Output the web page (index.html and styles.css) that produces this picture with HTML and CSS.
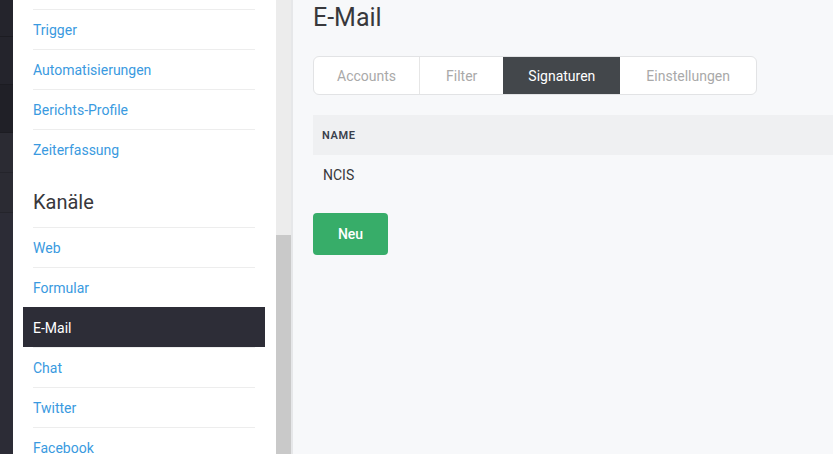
FILE: index.html
```html
<!DOCTYPE html>
<html lang="de">
<head>
  <meta charset="UTF-8">
  <title>E-Mail – Kanäle</title>
  <link rel="stylesheet" href="styles.css">
</head>
<body>

<div class="rail">
  <div class="rail-block"></div>
  <div class="rail-block"></div>
  <div class="rail-block rail-dark"></div>
  <div class="rail-block rail-light"></div>
  <div class="rail-block rail-light"></div>
  <div class="rail-rest"></div>
</div>

<aside class="sidebar">
  <ul class="nav">
    <li><a href="#">Trigger</a></li>
    <li><a href="#">Automatisierungen</a></li>
    <li><a href="#">Berichts-Profile</a></li>
    <li><a href="#">Zeiterfassung</a></li>
  </ul>
  <h3 class="nav-header">Kanäle</h3>
  <ul class="nav">
    <li><a href="#">Web</a></li>
    <li><a href="#">Formular</a></li>
    <li class="active"><a href="#">E-Mail</a></li>
    <li><a href="#">Chat</a></li>
    <li><a href="#">Twitter</a></li>
    <li><a href="#">Facebook</a></li>
  </ul>
</aside>

<div class="scrollbar">
  <div class="scroll-thumb"></div>
</div>

<main class="content">
  <h1>E-Mail</h1>

  <div class="tabs">
    <a class="tab" href="#">Accounts</a>
    <a class="tab" href="#">Filter</a>
    <a class="tab active" href="#">Signaturen</a>
    <a class="tab" href="#">Einstellungen</a>
  </div>

  <table class="table">
    <thead>
      <tr><th>Name</th></tr>
    </thead>
    <tbody>
      <tr><td>NCIS</td></tr>
    </tbody>
  </table>

  <button class="btn-new">Neu</button>
</main>

</body>
</html>
```

FILE: styles.css
```css
body {
  margin: 0;
  height: 454px;
  overflow: hidden;
  display: flex;
  font-family: Roboto, 'Noto Sans', sans-serif;
  font-size: 14px;
  background: #f7f8fa;
  color: #38383c;
}
.rail {
  width: 13px;
  flex-shrink: 0;
  display: flex;
  flex-direction: column;
  background: #2c2c36;
}
.rail-block {
  height: 47px;
  background: #24242c;
  border-bottom: 1px solid #1c1c22;
}
.rail-block:first-child {
  height: 36px;
}
.rail-dark {
  background: #202027;
}
.rail-light {
  height: 39px;
  background: #2b2b33;
  border-bottom-color: #24242b;
}
.rail-rest {
  flex: 1;
}
.sidebar {
  width: 242px;
  flex-shrink: 0;
  background: #fff;
  padding: 9px 11px 0 10px;
}
.nav {
  list-style: none;
  margin: 0;
  padding: 0;
}
.nav a {
  display: block;
  height: 40px;
  line-height: 42px;
  padding: 0 10px;
  overflow: hidden;
  color: #3a9ae0;
  text-decoration: none;
  background: linear-gradient(#ededed, #ededed) no-repeat 10px 0 / calc(100% - 20px) 1px;
}
.nav .active a {
  background: #2d2d37;
  color: #fff;
}
.nav-header {
  margin: 0;
  padding: 19px 10px 11px;
  font-size: 20px;
  line-height: 28px;
  font-weight: 400;
  color: #38383c;
}
.scrollbar {
  width: 15px;
  flex-shrink: 0;
  background: #ececec;
  border-right: 2px solid #e6e7e9;
  display: flex;
  flex-direction: column;
  justify-content: flex-end;
}
.scroll-thumb {
  height: 219px;
  background: #c9c9c9;
}
.content {
  flex: 1;
  padding: 0 0 0 20px;
  min-width: 0;
}
h1 {
  margin: 0;
  padding-top: 3px;
  font-size: 25px;
  line-height: 30px;
  font-weight: 400;
  color: #38383c;
}
.tabs {
  display: inline-flex;
  margin-top: 23px;
  background: #fff;
  border: 1px solid #e2e3e5;
  border-radius: 6px;
  overflow: hidden;
}
.tab {
  height: 37px;
  line-height: 38px;
  padding: 0 25px;
  color: #a9a9a9;
  text-decoration: none;
  border-left: 1px solid #e6e6e6;
}
.tab:first-child {
  border-left: none;
  padding: 0 23px;
}
.tab:nth-child(2) {
  padding: 0 26px;
}
.tab:last-child {
  padding: 0 26px;
}
.tab.active {
  padding: 0 24px;
  background: #43474b;
  color: #fff;
  border-left-color: #43474b;
}
.tab.active + .tab {
  border-left-color: #43474b;
}
.table {
  width: 100%;
  margin-top: 20px;
  border-collapse: collapse;
}
.table th {
  height: 40px;
  padding: 0 9px;
  text-align: left;
  background: #eff0f2;
  font-size: 11px;
  font-weight: 600;
  letter-spacing: 0.6px;
  text-transform: uppercase;
  color: #3a404c;
}
.table td {
  height: 40px;
  padding: 0 10px;
}
.btn-new {
  margin-top: 18px;
  width: 75px;
  height: 42px;
  border: none;
  border-radius: 4px;
  background: #37ad69;
  color: #fff;
  font-family: inherit;
  font-size: 14px;
  font-weight: 500;
  cursor: pointer;
}
```
